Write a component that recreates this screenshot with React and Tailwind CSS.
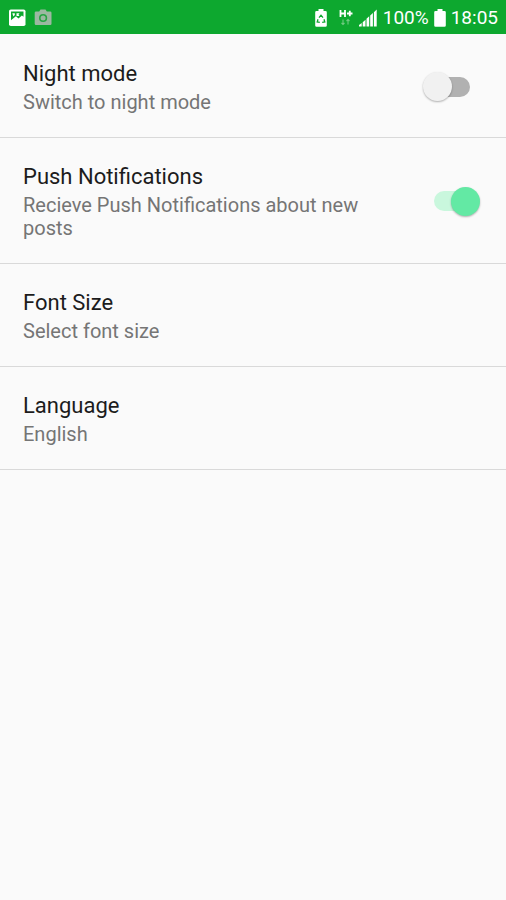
import { useState } from "react";

const ROW =
  "flex w-full items-center justify-between gap-6 border-b border-[#d9d9d9] pl-[23px] pr-[26px] pt-6 pb-[23px] text-left";

function StatusBar() {
  return (
    <header className="flex h-[34px] items-center justify-between bg-[#0da82f] px-2 pt-px text-white">
      <div className="flex items-center gap-2">
        {/* Screenshot saved */}
        <svg className="h-[18px] w-[18px]" viewBox="0 0 18 18">
          <rect x="1" y="0.5" width="16.5" height="16.5" rx="1.8" fill="#fff" />
          <path d="M3 2.500h12.500v5.200l-1.600-1.200-3.400 3-2.600-2.300L3 11.200z" fill="#0da82f" />
          <path d="M4.300 4.300h2.500v1.800l-1.400 1.500zM8.500 6.900V4.300h3l-1 1.500 1 1.100z" fill="#fff" />
        </svg>
        {/* Camera */}
        <svg className="h-[18px] w-[18px]" viewBox="0 0 18 18">
          <path
            d="M2 2.500h3.200L6.500.500h5L12.800 2.500h3.400q1.300 0 1.300 1.300v10.900q0 1.300-1.300 1.300H2q-1.300 0-1.300-1.300V3.800Q.7 2.500 2 2.500z"
            fill="#9cb8a1"
          />
          <circle cx="9.100" cy="9" r="3.300" fill="none" stroke="#27a443" strokeWidth="1.600" />
        </svg>
      </div>

      <div className="flex items-center">
        {/* Battery saver */}
        <svg className="mr-3 h-[18px] w-3" viewBox="0 0 12 18">
          <path d="M3.500 0h5v2h2q1.300 0 1.300 1.300v13.200q0 1.300-1.300 1.300h-9Q.2 17.800.2 16.500V3.300Q.2 2 1.500 2h2z" fill="#fff" />
          <path
            d="M4 8.600l2-2.400 2 2.400M9 10.300l.8 2.700-2.600.4M3 10.300L2.200 13l2.600.4"
            fill="none"
            stroke="#0da82f"
            strokeWidth="1.300"
          />
        </svg>
        {/* Mobile data */}
        <svg className="mr-[6px] h-[18px] w-[14px]" viewBox="0 0 14 18">
          <path d="M1.500 1v7M6 1v7M1.500 4.500H6M8 4.500h5.500M10.800 1.800v5.400" fill="none" stroke="#fff" strokeWidth="1.800" />
          <path d="M4 10.500v5M2.500 14L4 15.500 5.500 14M9 15.500v-5M7.500 12L9 10.500l1.500 1.500" fill="none" stroke="#6fca81" strokeWidth="1.100" />
        </svg>
        {/* Signal */}
        <svg className="mr-[6px] h-[18px] w-[18px]" viewBox="0 0 18 18" fill="#fff">
          <path d="M0 17.500v-1.500l2.700-1.900v3.400zM3.700 17.500v-4.300L6.500 10.700v6.800zM7.500 17.500V9.700L10.200 7.200v10.300zM11.200 17.500V6.500l2.700-2.500v13.500zM14.900 17.500V3.200L17.700.600v16.900z" />
        </svg>
        <span className="text-[19px] leading-6">100%</span>
        {/* Battery */}
        <svg className="mx-[5px] h-[18px] w-3" viewBox="0 0 12 18">
          <path d="M3.500 0h5v2h2q1.300 0 1.300 1.300v13.200q0 1.300-1.300 1.300h-9Q.2 17.800.2 16.500V3.300Q.2 2 1.500 2h2z" fill="#fff" />
        </svg>
        <span className="text-[19px] leading-6">18:05</span>
      </div>
    </header>
  );
}

function RowText({ title, summary }) {
  return (
    <span className="block min-w-0 flex-1">
      <span className="block text-[22px] leading-[30px] text-[#1c1c1c]">{title}</span>
      <span className="mt-[2px] block text-[20px] leading-[23px] text-[#757575]">{summary}</span>
    </span>
  );
}

function SwitchRow({ title, summary, checked, onChange }) {
  return (
    <label className={ROW + " cursor-pointer"}>
      <RowText title={title} summary={summary} />
      <span className="relative flex h-[29px] w-[57px] shrink-0 items-center justify-center">
        <input
          type="checkbox"
          role="switch"
          checked={checked}
          onChange={(e) => onChange(e.target.checked)}
          className="peer h-5 w-9 cursor-pointer appearance-none rounded-full bg-[#b1b1b1] outline-none checked:bg-[#c9f7dd]"
        />
        <span className="pointer-events-none absolute left-0 top-0 h-[29px] w-[29px] rounded-full bg-[#f1f1f1] shadow-[0_1px_2px_rgba(0,0,0,0.3)] transition-transform peer-checked:translate-x-7 peer-checked:bg-[#63e9a4]" />
      </span>
    </label>
  );
}

function LinkRow({ title, summary }) {
  return (
    <button type="button" className={ROW + " cursor-pointer"}>
      <RowText title={title} summary={summary} />
    </button>
  );
}

export default function App() {
  const [nightMode, setNightMode] = useState(false);
  const [push, setPush] = useState(true);

  return (
    <div className="min-h-screen bg-[#fafafa] font-['Roboto',sans-serif]">
      <StatusBar />
      <main className="pt-px">
        <SwitchRow
          title="Night mode"
          summary="Switch to night mode"
          checked={nightMode}
          onChange={setNightMode}
        />
        <SwitchRow
          title="Push Notifications"
          summary="Recieve Push Notifications about new posts"
          checked={push}
          onChange={setPush}
        />
        <LinkRow title="Font Size" summary="Select font size" />
        <LinkRow title="Language" summary="English" />
      </main>
    </div>
  );
}
